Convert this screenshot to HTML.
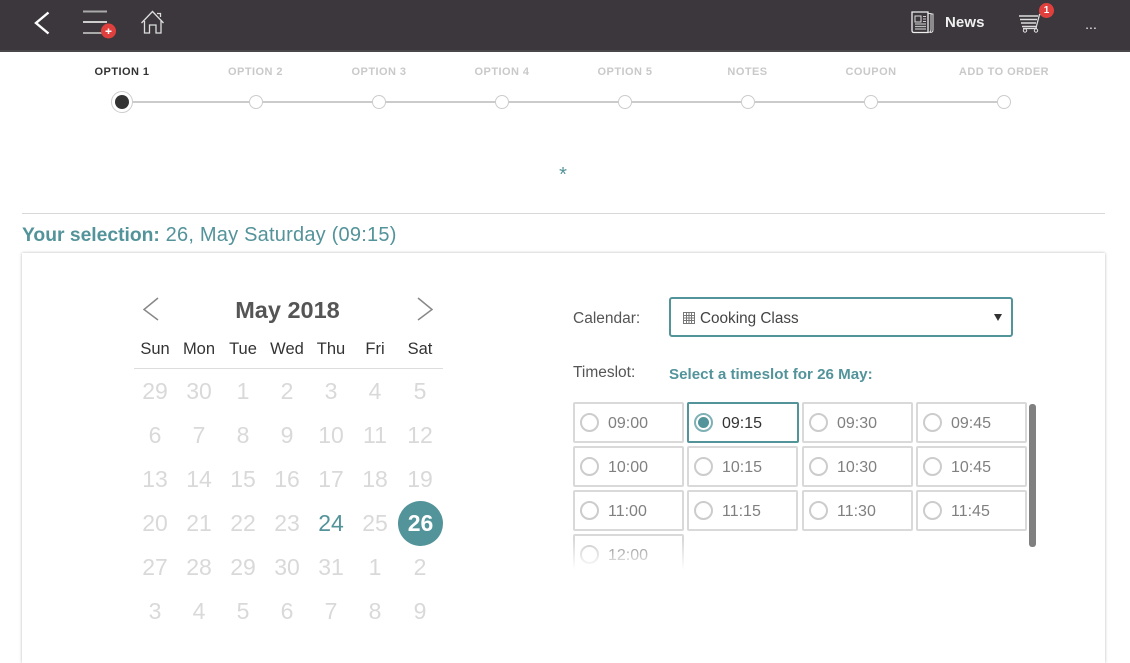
<!DOCTYPE html>
<html><head><meta charset="utf-8"><style>
html,body{margin:0;padding:0;background:#fff}
body{width:1130px;height:655px;overflow:hidden;position:relative;font-family:"Liberation Sans",sans-serif}
.a{position:absolute;white-space:nowrap}
.c{position:absolute;white-space:nowrap;transform:translateX(-50%);line-height:20px}
.st{top:65px;font-size:11px;font-weight:bold;color:#c9c9c9;letter-spacing:.45px;line-height:14px}
.dot{position:absolute;top:95px;width:12px;height:12px;border:1px solid #ccc;border-radius:50%;background:#fff}
.d{position:absolute;width:44px;text-align:center;font-size:23px;line-height:26px;color:#d9d9d9}
.h{position:absolute;width:44px;text-align:center;font-size:16.500px;line-height:20px;top:339px;color:#333}
.s{position:absolute;width:107px;height:37px;border:2px solid #d9d9d9;border-radius:2px;background:#fff}
.s i{position:absolute;left:5px;top:9px;width:15px;height:15px;border:2px solid #ccc;border-radius:50%}
.s b{position:absolute;left:33px;top:10px;font-weight:normal;font-size:16px;line-height:20px;color:#808080}
</style></head><body>
<div class="a" style="left:0;top:0;width:1130px;height:52px;background:#3b373c"></div>
<div class="a" style="left:0;top:50px;width:1130px;height:2px;background:#4a474b"></div>

<svg class="a" style="left:0;top:0" width="1130" height="52" fill="none">
<path d="M48.500 12.500L36 23L48.500 33.500" stroke="#fff" stroke-width="2.400"/>
<path d="M83 11.500H107M83 33H107" stroke="#aaa" stroke-width="2"/><path d="M83 22H107" stroke="#fff" stroke-width="1.400"/>
<circle cx="108.500" cy="31" r="7.500" fill="#e0403d"/><path d="M105.500 31.200H111.500M108.500 28.500V34" stroke="#fff" stroke-width="1.500"/>
<path d="M141.500 23L152.500 11.500L163.500 23M144.500 21V33H149.500V25H156V33H161V21M157 13.500H160.500V17" stroke="#ddd" stroke-width="1.300"/>
<path d="M912 12H928V32.500H914Q912 32.500 912 30.500Z" stroke="#eee" stroke-width="1.300"/><path d="M928 13.500H931V29Q931 32.500 928 32.500M931 14H933V30Q933 32.500 930 32.500" stroke="#ddd" stroke-width="1"/>
<rect x="915" y="16" width="6" height="6" stroke="#ddd"/><path d="M923 16.500H926M923 19H926M923 21.500H926" stroke="#ccc"/><path d="M915 24H926M915 26.500H926M915 29H926" stroke="#bbb" stroke-width="1.200"/>
<path d="M1019 16H1038M1020 19.500H1037M1021 23H1036M1022 26.500H1036" stroke="#ddd" stroke-width="1.500"/>
<path d="M1036 28L1039.500 14.500H1041M1023 28.500H1037" stroke="#ddd" stroke-width="1.300"/>
<circle cx="1025" cy="30.500" r="1.700" stroke="#ddd"/><circle cx="1036" cy="30.500" r="1.700" stroke="#ddd"/>
<circle cx="1046.500" cy="10.500" r="7.500" fill="#e0403d"/>
</svg>
<div class="c" style="left:1046.500px;top:1px;font-size:10px;font-weight:bold;color:#fff">1</div>
<div class="a" style="left:945px;top:13px;font-size:15px;line-height:20px;font-weight:bold;color:#f0f0f0;letter-spacing:.1px">News</div>
<div class="c" style="left:1091px;top:14px;font-size:14px;color:#eee">...</div>

<div class="c st" style="left:122px;color:#333">OPTION 1</div>
<div class="c st" style="left:255.500px">OPTION 2</div>
<div class="c st" style="left:379px">OPTION 3</div>
<div class="c st" style="left:502px">OPTION 4</div>
<div class="c st" style="left:625px">OPTION 5</div>
<div class="c st" style="left:747.500px">NOTES</div>
<div class="c st" style="left:871px">COUPON</div>
<div class="c st" style="left:1004px">ADD TO ORDER</div>

<div class="a" style="left:122px;top:101px;width:882px;height:2px;background:#cbcbcb"></div>
<div class="a" style="left:111px;top:91px;width:20px;height:20px;border:1px solid #ccc;border-radius:50%;background:#fff"></div>
<div class="a" style="left:115px;top:95px;width:14px;height:14px;border-radius:50%;background:#333"></div>
<div class="dot" style="left:249px"></div><div class="dot" style="left:372px"></div><div class="dot" style="left:495px"></div><div class="dot" style="left:618px"></div><div class="dot" style="left:741px"></div><div class="dot" style="left:864px"></div><div class="dot" style="left:997px"></div>

<div class="c" style="left:563px;top:165px;font-size:20px;color:#53939a">*</div>
<div class="a" style="left:22px;top:213px;width:1083px;height:1px;background:#d8d8d8"></div>
<div class="a" style="left:22px;top:223px;font-size:20px;line-height:24px;color:#53939a;letter-spacing:.22px"><b style="font-size:19.300px;letter-spacing:0">Your selection:</b> 26, May Saturday (09:15)</div>

<div class="a" style="left:22px;top:253px;width:1083px;height:410px;background:#fff;box-shadow:0 0 3px rgba(0,0,0,.28)"></div>

<svg class="a" style="left:135px;top:290px" width="310" height="40" fill="none" stroke="#888" stroke-width="1.500"><path d="M23 8L9 19.500L23 30M283 8L297 19.500L283 30"/></svg>
<div class="c" style="left:287.500px;top:298px;font-size:23.500px;line-height:24px;font-weight:bold;color:#555">May 2018</div>
<div class="h" style="left:133px">Sun</div><div class="h" style="left:177px">Mon</div><div class="h" style="left:221px">Tue</div><div class="h" style="left:265px">Wed</div><div class="h" style="left:309px">Thu</div><div class="h" style="left:353px">Fri</div><div class="h" style="left:398px">Sat</div>
<div class="a" style="left:134px;top:368px;width:309px;height:1px;background:#ddd"></div>

<div class="d" style="left:133px;top:378px">29</div><div class="d" style="left:177px;top:378px">30</div><div class="d" style="left:221px;top:378px">1</div><div class="d" style="left:265px;top:378px">2</div><div class="d" style="left:309px;top:378px">3</div><div class="d" style="left:353px;top:378px">4</div><div class="d" style="left:398px;top:378px">5</div>
<div class="d" style="left:133px;top:422px">6</div><div class="d" style="left:177px;top:422px">7</div><div class="d" style="left:221px;top:422px">8</div><div class="d" style="left:265px;top:422px">9</div><div class="d" style="left:309px;top:422px">10</div><div class="d" style="left:353px;top:422px">11</div><div class="d" style="left:398px;top:422px">12</div>
<div class="d" style="left:133px;top:466px">13</div><div class="d" style="left:177px;top:466px">14</div><div class="d" style="left:221px;top:466px">15</div><div class="d" style="left:265px;top:466px">16</div><div class="d" style="left:309px;top:466px">17</div><div class="d" style="left:353px;top:466px">18</div><div class="d" style="left:398px;top:466px">19</div>
<div class="d" style="left:133px;top:510px">20</div><div class="d" style="left:177px;top:510px">21</div><div class="d" style="left:221px;top:510px">22</div><div class="d" style="left:265px;top:510px">23</div><div class="d" style="left:309px;top:510px;color:#53939a">24</div><div class="d" style="left:353px;top:510px">25</div>
<div class="a" style="left:398px;top:501px;width:45px;height:45px;border-radius:50%;background:#53939a"></div>
<div class="d" style="left:398px;top:510px;color:#fff;font-weight:bold;width:45px">26</div>
<div class="d" style="left:133px;top:554px">27</div><div class="d" style="left:177px;top:554px">28</div><div class="d" style="left:221px;top:554px">29</div><div class="d" style="left:265px;top:554px">30</div><div class="d" style="left:309px;top:554px">31</div><div class="d" style="left:353px;top:554px">1</div><div class="d" style="left:398px;top:554px">2</div>
<div class="d" style="left:133px;top:598px">3</div><div class="d" style="left:177px;top:598px">4</div><div class="d" style="left:221px;top:598px">5</div><div class="d" style="left:265px;top:598px">6</div><div class="d" style="left:309px;top:598px">7</div><div class="d" style="left:353px;top:598px">8</div><div class="d" style="left:398px;top:598px">9</div>

<div class="a" style="left:573px;top:309px;font-size:15.500px;line-height:20px;color:#555">Calendar:</div>
<div class="a" style="left:669px;top:297px;width:340px;height:36px;border:2px solid #53939a;border-radius:3px;background:#fff"></div>
<svg class="a" style="left:683px;top:311px" width="13" height="13" fill="none" stroke="#777"><rect x=".5" y="1.500" width="11" height="11"/><path d="M.5 4.500H11.500M.5 7H11.500M.5 9.500H11.500M3.500 1V12.500M6 1V12.500M8.500 1V12.500"/></svg>
<div class="a" style="left:700px;top:309px;font-size:15.300px;line-height:20px;color:#444">Cooking Class</div>
<div class="a" style="left:994px;top:314px;width:0;height:0;border-left:4px solid transparent;border-right:4px solid transparent;border-top:7px solid #333"></div>

<div class="a" style="left:573px;top:363px;font-size:15.500px;line-height:20px;color:#555">Timeslot:</div>
<div class="a" style="left:669px;top:365px;font-size:15.150px;line-height:20px;font-weight:bold;color:#53939a">Select a timeslot for 26 May:</div>

<div class="s" style="left:573px;top:402px"><i></i><b>09:00</b></div>
<div class="s" style="left:687px;top:402px;width:108px;border-color:#53939a"><i style="border-color:#7fb0b6"></i><span class="a" style="left:9px;top:13px;width:11px;height:11px;border-radius:50%;background:#53939a"></span><b style="color:#333">09:15</b></div>
<div class="s" style="left:802px;top:402px"><i></i><b>09:30</b></div>
<div class="s" style="left:916px;top:402px"><i></i><b>09:45</b></div>
<div class="s" style="left:573px;top:446px"><i></i><b>10:00</b></div>
<div class="s" style="left:687px;top:446px"><i></i><b>10:15</b></div>
<div class="s" style="left:802px;top:446px"><i></i><b>10:30</b></div>
<div class="s" style="left:916px;top:446px"><i></i><b>10:45</b></div>
<div class="s" style="left:573px;top:490px"><i></i><b>11:00</b></div>
<div class="s" style="left:687px;top:490px"><i></i><b>11:15</b></div>
<div class="s" style="left:802px;top:490px"><i></i><b>11:30</b></div>
<div class="s" style="left:916px;top:490px"><i></i><b>11:45</b></div>
<div class="s" style="left:573px;top:534px"><i></i><b>12:00</b></div>
<div class="a" style="left:570px;top:540px;width:120px;height:35px;background:linear-gradient(to bottom,rgba(255,255,255,0),#fff 85%)"></div>
<div class="a" style="left:1029px;top:404px;width:7px;height:143px;border-radius:3px;background:#808080"></div>
</body></html>
